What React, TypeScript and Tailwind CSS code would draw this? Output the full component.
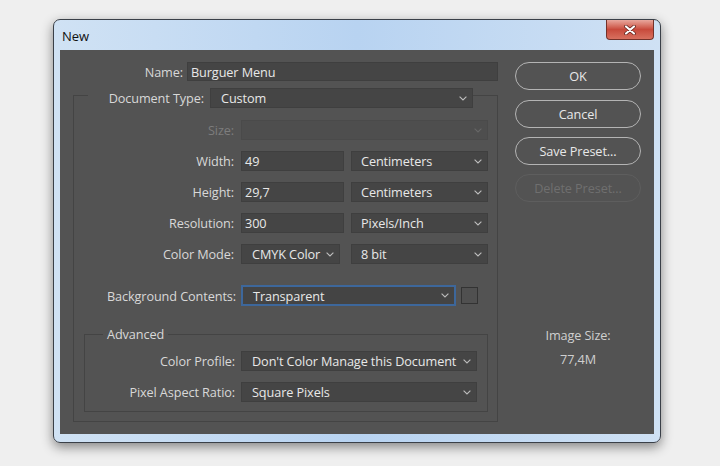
import React from "react";

function Chevron({ dim = false }: { dim?: boolean }) {
  return (
    <svg width="8" height="5" viewBox="0 0 8 5" className="shrink-0">
      <path
        d="M0.6 0.6L4 4L7.4 0.6"
        fill="none"
        stroke={dim ? "#666666" : "#bcbcbc"}
        strokeWidth="1.1"
      />
    </svg>
  );
}

function Select({
  w,
  text,
  pl = "pl-[10px]",
  disabled = false,
  focused = false,
}: {
  w: string;
  text: string;
  pl?: string;
  disabled?: boolean;
  focused?: boolean;
}) {
  const base = "h-[20px] flex items-center justify-between pr-[5px] shrink-0 whitespace-nowrap";
  const skin = disabled
    ? "bg-[#4e4e4e] border border-[#4a4a4a]"
    : focused
    ? "bg-[#444444] border-2 border-[#3d679b] h-[21px]"
    : "bg-[#454545] border border-[#3f3f3f]";
  return (
    <div className={`${base} ${skin} ${w} ${pl}`}>
      <span className="text-[#e8e8e8]">{text}</span>
      <Chevron dim={disabled} />
    </div>
  );
}

function Input({ w, text }: { w: string; text: string }) {
  return (
    <div
      className={`h-[20px] flex items-center pl-[3px] bg-[#454545] border border-[#3f3f3f] text-[#e8e8e8] shrink-0 ${w}`}
    >
      {text}
    </div>
  );
}

function Btn({ text, disabled = false }: { text: string; disabled?: boolean }) {
  return (
    <div
      className={
        disabled
          ? "w-[126px] h-[28px] rounded-full border-[1.5px] border-[#5e5e5e] flex items-center justify-center text-[#6f6f6f]"
          : "w-[126px] h-[28px] rounded-full border-[1.5px] border-[#b4b4b4] flex items-center justify-center text-[#e8e8e8]"
      }
    >
      {text}
    </div>
  );
}

export default function App() {
  return (
    <div className="w-[720px] h-[466px] bg-[#efefef] pt-[19px] pl-[53px] overflow-hidden font-['Open_Sans',sans-serif] text-[12.7px] tracking-[-0.1px] leading-[16px]">
      <div className="w-[608px] h-[424px] rounded-[7px] border border-[#3a4048] bg-gradient-to-r from-[#d0e2f4] via-[#b8d3f1] to-[#cfe1f4] shadow-[0_4px_12px_rgba(0,0,0,0.45)] flex flex-col overflow-hidden">
        {/* Title bar */}
        <div className="h-[30px] flex justify-between shrink-0">
          <div className="pl-[8px] pt-[1px] flex items-center text-[13px] font-medium text-[#111111]">New</div>
          <div className="w-[48px] h-[20px] mr-[6px] rounded-b-[4px] border border-t-0 border-[#74322a] bg-gradient-to-b from-[#e8a79d] via-[#c84a3c] to-[#d8705f] flex items-center justify-center">
            <svg width="12" height="10" viewBox="0 0 12 10">
              <path d="M2 1.5L10 8.5M10 1.5L2 8.5" stroke="#5a1c16" strokeWidth="3.6" strokeLinecap="round" />
              <path d="M2 1.5L10 8.5M10 1.5L2 8.5" stroke="#ffffff" strokeWidth="2.2" strokeLinecap="round" />
            </svg>
          </div>
        </div>

        {/* Content */}
        <div className="mx-[6px] h-[384px] bg-[#535353] flex shrink-0 text-[#d8d8d8]">
          {/* Left column */}
          <div className="w-[455px] pt-[12px] flex flex-col">
            <div className="flex items-center h-[19px]">
              <div className="w-[123px] text-right">Name:</div>
              <div className="ml-[4px] w-[311px] h-[19px] flex items-center pl-[3px] bg-[#454545] border border-[#3f3f3f] text-[#e8e8e8]">
                Burguer Menu
              </div>
            </div>

            <fieldset className="mt-[1px] ml-[13px] w-[425px] border border-[#444444] pb-[9px]">
              <legend className="ml-[14px] pt-[6px]">
                <div className="flex items-center">
                  <div className="w-[116px] text-right">Document Type:</div>
                  <div className="ml-[6px]">
                    <Select w="w-[263px]" text="Custom" />
                  </div>
                </div>
              </legend>

              <div className="mt-[12px] flex items-center h-[20px]">
                <div className="w-[160px] text-right text-[#7d7d7d]">Size:</div>
                <div className="ml-[7px]">
                  <Select w="w-[247px]" text="" disabled />
                </div>
              </div>

              <div className="mt-[11px] flex items-center h-[20px]">
                <div className="w-[160px] text-right">Width:</div>
                <div className="ml-[7px] flex gap-[7px]">
                  <Input w="w-[103px]" text="49" />
                  <Select w="w-[137px]" text="Centimeters" pl="pl-[9px]" />
                </div>
              </div>

              <div className="mt-[11px] flex items-center h-[20px]">
                <div className="w-[160px] text-right">Height:</div>
                <div className="ml-[7px] flex gap-[7px]">
                  <Input w="w-[103px]" text="29,7" />
                  <Select w="w-[137px]" text="Centimeters" pl="pl-[9px]" />
                </div>
              </div>

              <div className="mt-[11px] flex items-center h-[20px]">
                <div className="w-[160px] text-right">Resolution:</div>
                <div className="ml-[7px] flex gap-[7px]">
                  <Input w="w-[103px]" text="300" />
                  <Select w="w-[137px]" text="Pixels/Inch" pl="pl-[9px]" />
                </div>
              </div>

              <div className="mt-[11px] flex items-center h-[20px]">
                <div className="w-[160px] text-right">Color Mode:</div>
                <div className="ml-[7px] flex gap-[11px]">
                  <Select w="w-[99px]" text="CMYK Color" />
                  <Select w="w-[137px]" text="8 bit" pl="pl-[9px]" />
                </div>
              </div>

              <div className="mt-[21px] flex items-center h-[21px]">
                <div className="w-[162px] text-right">Background Contents:</div>
                <div className="ml-[5px] flex items-center gap-[5px]">
                  <Select w="w-[215px]" text="Transparent" focused />
                  <div className="w-[17px] h-[17px] border border-[#333333] bg-[#505050]" />
                </div>
              </div>

              <fieldset className="mt-[20px] ml-[10px] w-[404px] border border-[#444444] pb-[9px]">
                <legend className="ml-[18px] px-[4px]">Advanced</legend>
                <div className="mt-[9px] flex items-center h-[20px]">
                  <div className="w-[150px] text-right">Color Profile:</div>
                  <div className="ml-[6px]">
                    <Select w="w-[236px]" text="Don't Color Manage this Document" />
                  </div>
                </div>
                <div className="mt-[11px] flex items-center h-[20px]">
                  <div className="w-[150px] text-right">Pixel Aspect Ratio:</div>
                  <div className="ml-[6px]">
                    <Select w="w-[236px]" text="Square Pixels" />
                  </div>
                </div>
              </fieldset>
            </fieldset>
          </div>

          {/* Right column */}
          <div className="w-[126px] pt-[12px] flex flex-col items-center">
            <Btn text="OK" />
            <div className="mt-[10px]">
              <Btn text="Cancel" />
            </div>
            <div className="mt-[9px]">
              <Btn text="Save Preset..." />
            </div>
            <div className="mt-[9px]">
              <Btn text="Delete Preset..." disabled />
            </div>
            <div className="mt-[125px] text-[#cfcfcf]">Image Size:</div>
            <div className="mt-[8px] text-[#cfcfcf]">77,4M</div>
          </div>
        </div>
      </div>
    </div>
  );
}
